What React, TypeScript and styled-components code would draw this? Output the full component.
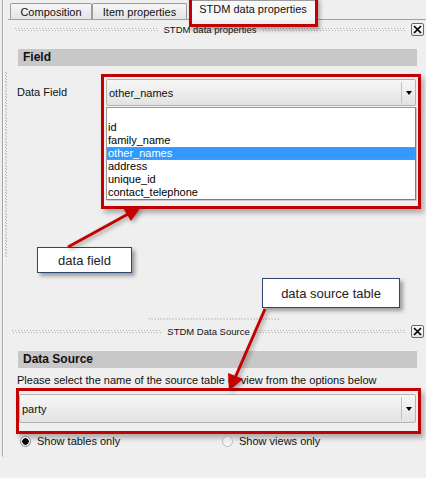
import React from 'react';
import styled, { createGlobalStyle } from 'styled-components';

const Global = createGlobalStyle`
  html, body { margin: 0; padding: 0; background: #efefef; }
  body { font-family: "Liberation Sans", Arial, sans-serif; font-size: 11px; color: #000; }
`;

const Page = styled.div`
  position: relative;
  width: 426px;
  height: 478px;
  overflow: hidden;
  background: #efefef;
`;

const Frame = styled.div`
  margin-left: 2px;
  height: 457px;
  border-left: 1px solid #a2a2a2;
  box-shadow: inset 1px 0 #fbfbfb;
  border-bottom-left-radius: 2px;
`;

const TabBar = styled.div`
  display: flex;
  align-items: flex-end;
  height: 19px;
  margin-left: 5px;
  padding-left: 2px;
  border-bottom: 1px solid #a0a0a0;
`;

const Tab = styled.div<{ $w: number; $active?: boolean }>`
  box-sizing: border-box;
  width: ${(p) => p.$w}px;
  height: ${(p) => (p.$active ? 20 : 16)}px;
  margin-left: ${(p) => (p.$active ? 2 : 0)}px;
  margin-bottom: ${(p) => (p.$active ? -1 : 0)}px;
  border: 1px solid #9c9c9c;
  border-bottom: none;
  border-radius: 2px 2px 0 0;
  background: ${(p) =>
    p.$active ? '#f8f8f8' : 'linear-gradient(#f6f6f6, #e4e4e4)'};
  display: flex;
  align-items: center;
  justify-content: center;
  padding-bottom: ${(p) => (p.$active ? 3 : 0)}px;
  font-size: 11px;
  color: #111;
  white-space: nowrap;
`;

const TabHighlight = styled.div`
  position: absolute;
  left: 189px;
  top: -3px;
  width: 129px;
  height: 30px;
  box-sizing: border-box;
  border: 3px solid #c40000;
  box-shadow: 2px 3px 4px rgba(0, 0, 0, 0.3);
`;

const DockTitle = styled.div<{ $pl: number }>`
  display: flex;
  align-items: center;
  gap: 6px;
  height: ${(p) => (p.$pl > 10 ? 18 : 17)}px;
  padding-left: ${(p) => p.$pl}px;
  padding-right: 2px;
`;

const Grip = styled.div`
  flex: 1;
  height: 3px;
  background-image: linear-gradient(90deg, #b2b2b2 1px, transparent 1px),
    linear-gradient(90deg, #b2b2b2 1px, transparent 1px);
  background-size: 3px 1px, 3px 1px;
  background-position: 0 0, 1px 2px;
  background-repeat: repeat-x;
`;

const DockName = styled.span`
  font-size: 9.5px;
  color: #111;
  white-space: nowrap;
`;

const CloseBtn = styled.div`
  box-sizing: border-box;
  width: 13px;
  height: 13px;
  border: 1px solid #6a6a6a;
  border-radius: 2px;
  background: linear-gradient(#fdfdfd, #e6e6e6);
  display: flex;
  align-items: center;
  justify-content: center;
`;

const DockBody = styled.div`
  display: flex;
`;

const VGrip = styled.div`
  margin-left: 2px;
  margin-top: 34px;
  width: 2px;
  height: 185px;
  background-image: linear-gradient(#b2b2b2 1px, transparent 1px),
    linear-gradient(#b2b2b2 1px, transparent 1px);
  background-size: 1px 3px, 1px 3px;
  background-position: 0 0, 1px 1px;
  background-repeat: repeat-y;
`;

const Column = styled.div<{ $ml: number; $w: number }>`
  margin-left: ${(p) => p.$ml}px;
  width: ${(p) => p.$w}px;
  display: flex;
  flex-direction: column;
`;

const SectionHeader = styled.div<{ $ml: number }>`
  margin: 11px 4px 0 ${(p) => p.$ml}px;
  height: 17px;
  line-height: 17px;
  padding-left: 5px;
  background: #c8c8c8;
  font-size: 12px;
  font-weight: bold;
  color: #111;
`;

const FieldRow = styled.div`
  margin-top: 8px;
  display: flex;
  align-items: flex-start;
`;

const Label = styled.div`
  width: 84px;
  margin-top: 12px;
  line-height: 13px;
  color: #111;
`;

const RedBox = styled.div<{ $pad: string; $w: number; $mt?: number }>`
  box-sizing: border-box;
  width: ${(p) => p.$w}px;
  margin-top: ${(p) => p.$mt ?? 0}px;
  border: 3px solid #c40000;
  padding: ${(p) => p.$pad};
  box-shadow: 3px 4px 5px rgba(0, 0, 0, 0.28);
`;

const Combo = styled.div<{ $h: number }>`
  box-sizing: border-box;
  height: ${(p) => p.$h}px;
  border: 1px solid #b4b4b4;
  border-radius: 2px;
  background: linear-gradient(#f7f7f7 0%, #eeeeee 45%, #e2e2e2 100%);
  display: flex;
  align-items: center;
`;

const ComboText = styled.div`
  flex: 1;
  padding-left: 2px;
  color: #111;
`;

const ComboArrow = styled.div`
  width: 13px;
  align-self: stretch;
  margin: 2px 0;
  border-left: 1px solid #c2c2c2;
  display: flex;
  align-items: center;
  justify-content: center;
  &::after {
    content: '';
    border-left: 3px solid transparent;
    border-right: 3px solid transparent;
    border-top: 4px solid #000;
  }
`;

const List = styled.div`
  margin-top: 1px;
  border: 1px solid #9a9a9a;
  border-right-color: #7e7e7e;
  border-bottom-color: #7e7e7e;
  box-shadow: 1px 1px 0 #c8c8c8;
  background: #fff;
`;

const Item = styled.div<{ $sel?: boolean }>`
  height: 13px;
  line-height: 13px;
  padding-left: 1px;
  color: ${(p) => (p.$sel ? '#fff' : '#000')};
  background: ${(p) => (p.$sel ? '#3399ff' : 'transparent')};
  outline: ${(p) => (p.$sel ? '1px dotted #c8853a' : 'none')};
  outline-offset: -1px;
`;

const FloatGrip = styled.div`
  margin-left: 145px;
  margin-top: 61px;
  width: 132px;
  height: 2px;
  background-image: linear-gradient(90deg, #c0c0c0 1px, transparent 1px),
    linear-gradient(90deg, #c0c0c0 1px, transparent 1px);
  background-size: 3px 1px, 3px 1px;
  background-position: 0 0, 1px 1px;
  background-repeat: repeat-x;
`;

const Spacer = styled.div`
  height: 3px;
`;

const Instruction = styled.div`
  margin: 6px 0 0 1px;
  line-height: 13px;
  color: #111;
  white-space: nowrap;
`;

const RadioRow = styled.div`
  margin: 1px 0 0 4px;
  display: grid;
  grid-template-columns: 202px 202px;
  height: 12px;
`;

const RadioOption = styled.div`
  display: flex;
  align-items: center;
  gap: 6px;
  color: #111;
  white-space: nowrap;
`;

const RadioDot = styled.div<{ $on?: boolean }>`
  box-sizing: border-box;
  width: 11px;
  height: 11px;
  border-radius: 50%;
  border: 1px solid ${(p) => (p.$on ? '#8a8a8a' : '#b8b8b8')};
  background: ${(p) =>
    p.$on
      ? 'radial-gradient(circle, #000 0 3px, #e8e8e8 3.4px, #f8f8f8 100%)'
      : 'linear-gradient(#e2e2e2, #fafafa)'};
`;

const Callout = styled.div<{ $x: number; $y: number; $w: number; $h: number }>`
  position: absolute;
  left: ${(p) => p.$x}px;
  top: ${(p) => p.$y}px;
  width: ${(p) => p.$w}px;
  height: ${(p) => p.$h}px;
  box-sizing: border-box;
  border: 1px solid #2c4770;
  background: #fff;
  box-shadow: 3px 3px 4px rgba(0, 0, 0, 0.35);
  display: flex;
  align-items: center;
  justify-content: center;
  font-size: 13px;
  color: #222;
`;

const Arrows = styled.svg`
  position: absolute;
  left: 0;
  top: 0;
  pointer-events: none;
  filter: drop-shadow(2px 2px 2px rgba(0, 0, 0, 0.35));
`;

const Close = () => (
  <CloseBtn>
    <svg width="9" height="9" viewBox="0 0 9 9">
      <path d="M1 1L8 8M8 1L1 8" stroke="#000" strokeWidth="1.7" />
    </svg>
  </CloseBtn>
);

const fields = ['', 'id', 'family_name', 'other_names', 'address', 'unique_id', 'contact_telephone'];

export default function App() {
  return (
    <Page>
      <Global />
      <Frame>
        <TabBar>
          <Tab $w={82}>Composition</Tab>
          <Tab $w={95}>Item properties</Tab>
          <Tab $w={128} $active>
            STDM data properties
          </Tab>
        </TabBar>
        <DockTitle $pl={12}>
          <Grip />
          <DockName>STDM data properties</DockName>
          <Grip />
          <Close />
        </DockTitle>
        <DockBody>
          <VGrip />
          <Column $ml={10} $w={404}>
            <SectionHeader $ml={1}>Field</SectionHeader>
            <FieldRow>
              <Label>Data Field</Label>
              <RedBox $w={320} $pad="2px 2px 6px 2px">
                <Combo $h={27}>
                  <ComboText>other_names</ComboText>
                  <ComboArrow />
                </Combo>
                <List>
                  {fields.map((f, i) => (
                    <Item key={i} $sel={f === 'other_names'}>
                      {f}
                    </Item>
                  ))}
                </List>
              </RedBox>
            </FieldRow>
          </Column>
        </DockBody>
        <FloatGrip />
        <Spacer />
        <DockTitle $pl={9}>
          <Grip />
          <DockName>STDM Data Source</DockName>
          <Grip />
          <Close />
        </DockTitle>
        <Column $ml={13} $w={405}>
          <SectionHeader $ml={2}>Data Source</SectionHeader>
          <Instruction>
            Please select the name of the source table or view from the options below
          </Instruction>
          <RedBox $w={405} $mt={1} $pad="3px 2px 8px 0">
            <Combo $h={29}>
              <ComboText>party</ComboText>
              <ComboArrow />
            </Combo>
          </RedBox>
          <RadioRow>
            <RadioOption>
              <RadioDot $on />
              Show tables only
            </RadioOption>
            <RadioOption>
              <RadioDot />
              Show views only
            </RadioOption>
          </RadioRow>
        </Column>
      </Frame>

      <TabHighlight />
      <Callout $x={37} $y={247} $w={95} $h={26}>
        data field
      </Callout>
      <Callout $x={262} $y={278} $w={138} $h={30}>
        data source table
      </Callout>
      <Arrows width="426" height="478" viewBox="0 0 426 478">
        <line x1="68" y1="247" x2="130" y2="213" stroke="#c40000" strokeWidth="3" />
        <polygon points="141,207 131,221 123,208" fill="#c40000" />
        <line x1="265" y1="309" x2="235" y2="378" stroke="#c40000" strokeWidth="3" />
        <polygon points="229,391 243,379 228,373" fill="#c40000" />
      </Arrows>
    </Page>
  );
}
